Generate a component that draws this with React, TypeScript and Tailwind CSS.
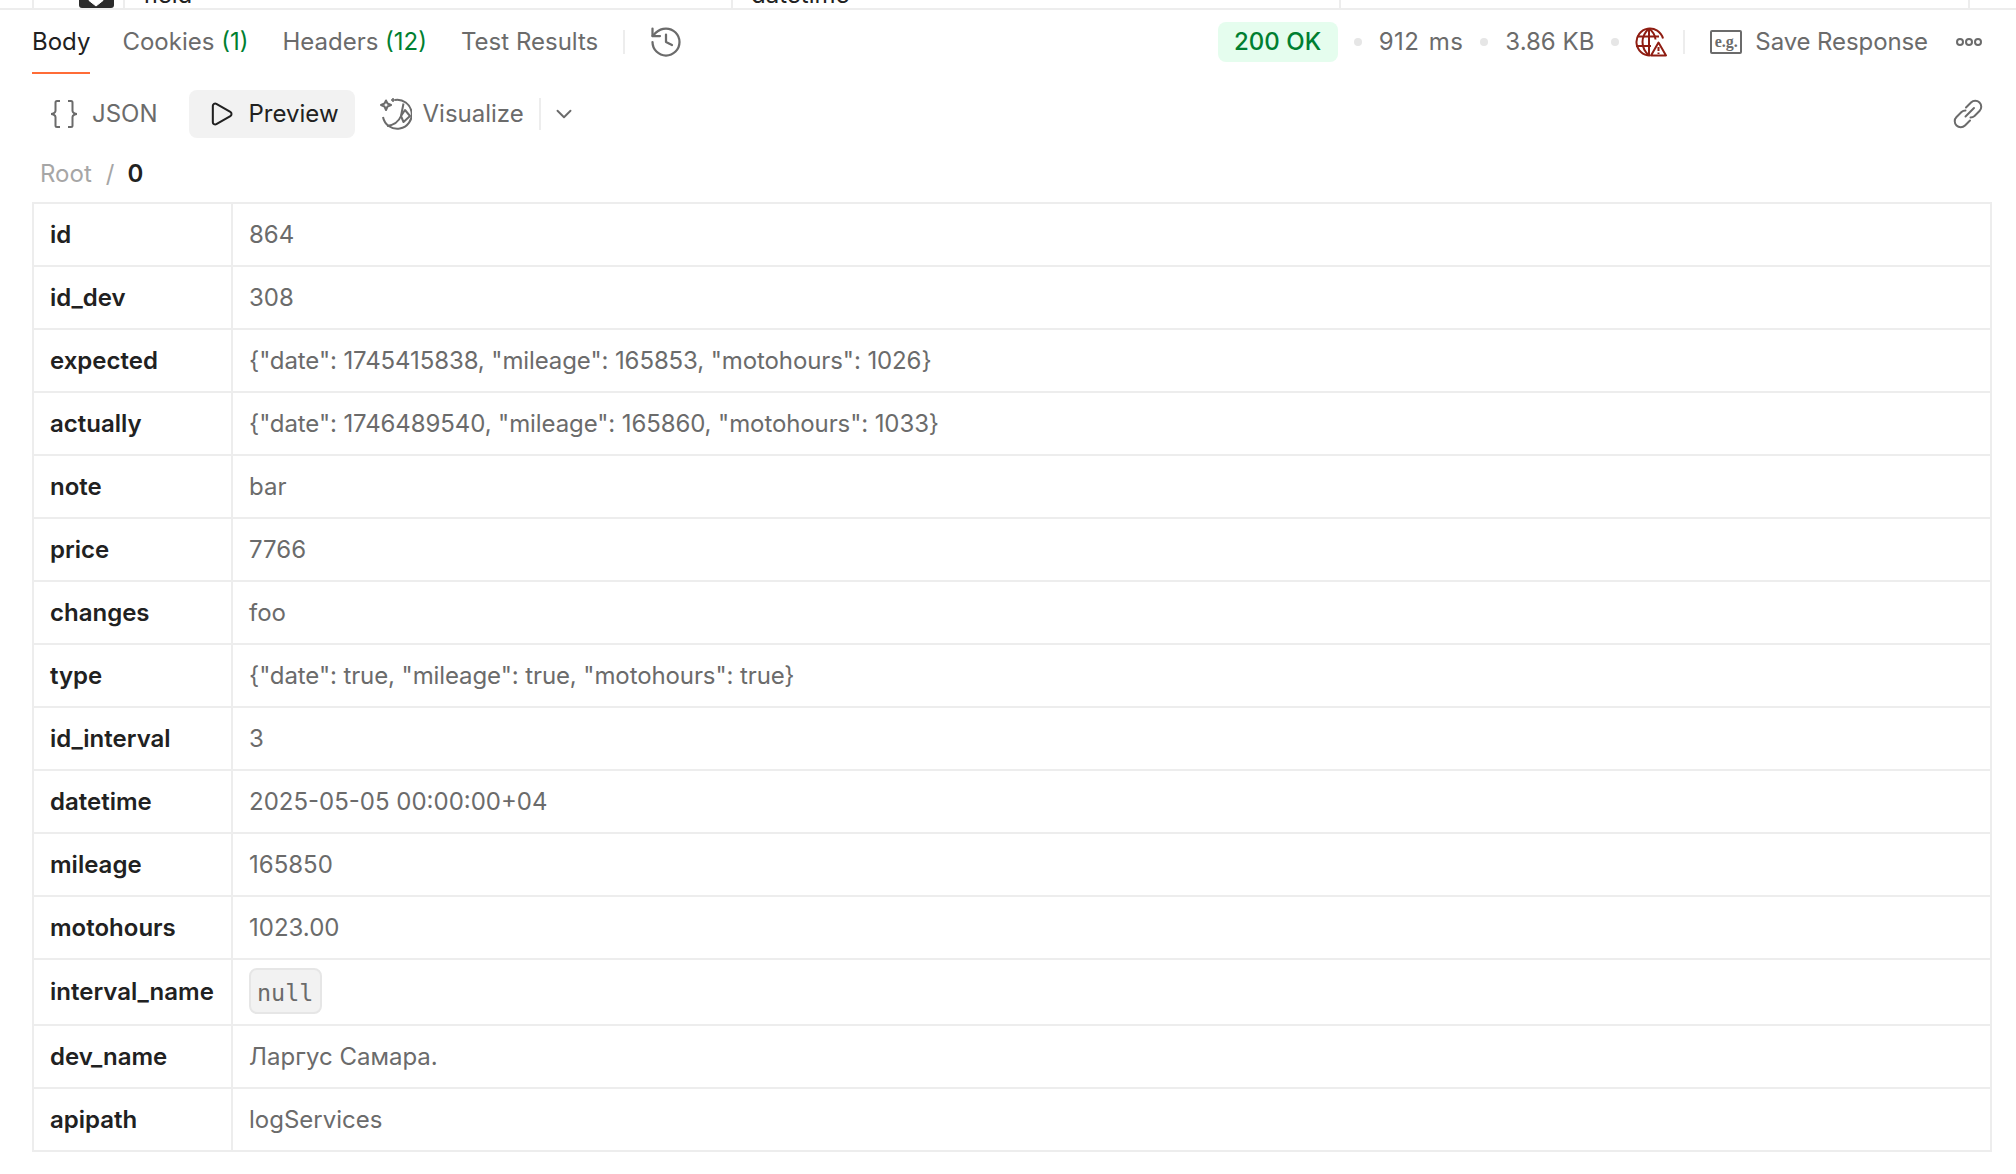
import { FC, ReactElement } from 'react';
import { ChevronDown, History, Play } from 'lucide-react';

interface IRow {
  name: string;
  value: string;
}

const rows: IRow[] = [
  { name: 'id', value: '864' },
  { name: 'id_dev', value: '308' },
  { name: 'expected', value: '{"date": 1745415838, "mileage": 165853, "motohours": 1026}' },
  { name: 'actually', value: '{"date": 1746489540, "mileage": 165860, "motohours": 1033}' },
  { name: 'note', value: 'bar' },
  { name: 'price', value: '7766' },
  { name: 'changes', value: 'foo' },
  { name: 'type', value: '{"date": true, "mileage": true, "motohours": true}' },
  { name: 'id_interval', value: '3' },
  { name: 'datetime', value: '2025-05-05 00:00:00+04' },
  { name: 'mileage', value: '165850' },
  { name: 'motohours', value: '1023.00' },
  { name: 'interval_name', value: 'null' },
  { name: 'dev_name', value: 'Ларгус Самара.' },
  { name: 'apipath', value: 'logServices' }
];

const Dot: FC = (): ReactElement => <span className="h-2 w-2 rounded-full bg-[#e6e6e6]" />;

const BracesIcon: FC = (): ReactElement => (
  <svg width="28" height="28" viewBox="0 0 28 28" fill="none" stroke="#6b6b6b" strokeWidth="2">
    <path d="M10 1H7a1.500 1.500 0 0 0-1.500 1.500V11C5.500 12.500 3 14 1 14c2 0 4.500 1.500 4.500 3v8.500A1.500 1.500 0 0 0 7 27h3" />
    <path d="M18 1h3a1.500 1.500 0 0 1 1.500 1.500V11c0 1.500 2.500 3 4.500 3-2 0-4.500 1.500-4.500 3v8.500A1.500 1.500 0 0 1 21 27h-3" />
  </svg>
);

const VisualizeIcon: FC = (): ReactElement => (
  <svg width="32" height="32" viewBox="0 0 32 32" fill="none" stroke="#6b6b6b" strokeWidth="2" strokeLinejoin="round">
    <path d="M15 2a14.500 14.500 0 1 1-12 17" />
    <path d="M7 28c8-1 12-5 14-10l2.500-12.500" />
    <path d="M25 12l5 6-6.500 6-2.500-6z" />
    <path d="M6 2.500l1.500 3 3.500 1.500-3.500 1.500L6 12 4.500 8.500 1 7l3.500-1.500z" />
    <path d="M13 0v4M11 2h4" strokeWidth="1.500" />
  </svg>
);

const GlobeWarningIcon: FC = (): ReactElement => (
  <svg width="32" height="30" viewBox="0 0 32 30" fill="none" stroke="#8f1d12" strokeWidth="2">
    <path d="M15 28.500a13.500 13.500 0 1 1 13-17" />
    <path d="M14 1.500C9 6 7.500 10 7.500 15s1.500 9 6.500 13.500" />
    <path d="M14 1.500c4 3 6 6.500 6.500 11" />
    <path d="M14 1v27M2 9.500h22M1 19h15" />
    <path d="M23.500 15.500 31 28.500H16z" fill="white" strokeLinejoin="round" />
    <path d="M23.500 20v4M23.500 25.500v1.500" />
  </svg>
);

const ExampleIcon: FC = (): ReactElement => (
  <div className="flex h-[24px] w-[32px] items-center justify-center rounded-[2px] border-2 border-[#6b6b6b] font-['Liberation_Serif',serif] text-[16px] font-bold leading-none text-[#6b6b6b]">
    e.g.
  </div>
);

const LinkIcon: FC = (): ReactElement => (
  <svg width="30" height="30" viewBox="0 0 30 30" fill="none" stroke="#6b6b6b" strokeWidth="2" strokeLinecap="round">
    <path d="M12.500 17.500 21 9" />
    <path d="M13 8.500l5-5a6 6 0 0 1 8.500 8.500l-5 5a6 6 0 0 1-4 1.500" />
    <path d="M17 21.500l-5 5A6 6 0 0 1 3.500 18l5-5a6 6 0 0 1 4-1.500" />
  </svg>
);

const RunnerBadge: FC = (): ReactElement => (
  <svg width="35" height="8" viewBox="0 0 35 8">
    <path d="M0 0h35v5a3 3 0 0 1-3 3H3a3 3 0 0 1-3-3z" fill="#2b2b2b" />
    <path d="M10 0h14v0.500L17 6 10 0.500z" fill="white" stroke="white" strokeLinejoin="round" />
  </svg>
);

const TopStrip: FC = (): ReactElement => (
  <div className="flex h-[10px] overflow-hidden border-b-2 border-[#ededed] pl-[32px] text-[#212121]">
    <div className="w-[91px] border-l-2 border-[#ededed] pl-[45px]">
      <RunnerBadge />
    </div>
    <div className="flex w-[608px] items-end border-l-2 border-[#ededed] pl-[18px]">
      <span className="-mb-[1px] leading-[28px]">field</span>
    </div>
    <div className="flex w-[608px] items-end border-l-2 border-[#ededed] pl-[18px]">
      <span className="-mb-[1px] leading-[28px]">datetime</span>
    </div>
    <div className="w-[629px] border-l-2 border-[#ededed]" />
    <div className="flex-1 border-l-2 border-[#ededed]" />
  </div>
);

const ResponseTabs: FC = (): ReactElement => (
  <div className="flex h-[64px] items-center pl-[32px] pr-[34px]">
    <div className="relative flex h-full items-center text-[#212121]">
      Body
      <span className="absolute bottom-0 left-0 h-[2px] w-full bg-[#ff6c37]" />
    </div>
    <span className="ml-[32px]">
      Cookies <span className="text-[#007f31]">(1)</span>
    </span>
    <span className="ml-[34px]">
      Headers <span className="text-[#007f31]">(12)</span>
    </span>
    <span className="ml-[34px]">Test Results</span>
    <span className="ml-[25px] h-[24px] w-[2px] bg-[#ededed]" />
    <History size={36} strokeWidth={1.500} color="#6b6b6b" className="ml-[23px]" />
    <div className="ml-auto flex items-center">
      <span className="flex h-[40px] w-[120px] items-center justify-center rounded-[8px] bg-[#e5fdee] font-medium text-[#007f31]">200 OK</span>
      <span className="ml-[16px] flex items-center gap-[17px]">
        <Dot />
        <span className="tracking-[0.5px] [word-spacing:2px]">912 ms</span>
        <Dot />
        3.86 KB
        <Dot />
      </span>
      <span className="ml-[16px]">
        <GlobeWarningIcon />
      </span>
      <span className="ml-[16px] h-[24px] w-[2px] bg-[#ededed]" />
      <span className="ml-[25px]">
        <ExampleIcon />
      </span>
      <span className="ml-[13px] tracking-[-0.1px]">Save Response</span>
      <span className="ml-[28px] flex gap-[1px]">
        <span className="h-2 w-2 rounded-full border-2 border-[#6b6b6b]" />
        <span className="h-2 w-2 rounded-full border-2 border-[#6b6b6b]" />
        <span className="h-2 w-2 rounded-full border-2 border-[#6b6b6b]" />
      </span>
    </div>
  </div>
);

const ViewBar: FC = (): ReactElement => (
  <div className="mt-2 flex h-[64px] items-center pl-[50px] pr-[33px]">
    <BracesIcon />
    <span className="ml-[14px]">JSON</span>
    <div className="ml-[31px] flex h-[48px] w-[166px] items-center rounded-[8px] bg-[#f2f2f2] pl-[18px] text-[#212121]">
      <Play size={28} strokeWidth={1.750} color="#212121" />
      <span className="ml-[14px]">Preview</span>
    </div>
    <span className="ml-[25px]">
      <VisualizeIcon />
    </span>
    <span className="ml-[11px]">Visualize</span>
    <span className="ml-[15px] h-[32px] w-[2px] bg-[#ededed]" />
    <ChevronDown size={26} strokeWidth={1.750} color="#6b6b6b" className="ml-[10px]" />
    <span className="ml-auto">
      <LinkIcon />
    </span>
  </div>
);

const App: FC = (): ReactElement => {
  return (
    <div className="h-[1174px] overflow-hidden bg-white font-['Inter',sans-serif] text-[24px] text-[#6b6b6b]">
      <TopStrip />
      <ResponseTabs />
      <ViewBar />
      <div className="flex h-[56px] items-center pl-[40px]">
        <span className="text-[#a6a6a6]">Root</span>
        <span className="ml-[14px] text-[#a6a6a6]">/</span>
        <span className="ml-[13px] font-semibold text-[#212121]">0</span>
      </div>
      <div className="mx-[32px] mr-[24px] border-2 border-b-0 border-[#ededed]">
        {rows.map((row: IRow) => (
          <div key={row.name} className="flex border-b-2 border-[#ededed]">
            <div className="flex w-[199px] shrink-0 items-center border-r-2 border-[#ededed] pl-[16px] font-semibold text-[#212121]">{row.name}</div>
            <div className={`flex min-h-[61px] items-center pl-[16px] ${row.value.startsWith('{') ? 'tracking-[-0.1px]' : ''}`}>
              {row.name === 'interval_name' ? (
                <span className="mt-[8px] mb-[10px] rounded-[8px] border-2 border-[#e6e6e6] bg-[#f2f2f2] pb-[2px] pl-[6px] pr-[7px] pt-[6px] font-['DejaVu_Sans_Mono',monospace] text-[23.4px] leading-[34px]">
                  {row.value}
                </span>
              ) : (
                row.value
              )}
            </div>
          </div>
        ))}
      </div>
    </div>
  );
};

export default App;
